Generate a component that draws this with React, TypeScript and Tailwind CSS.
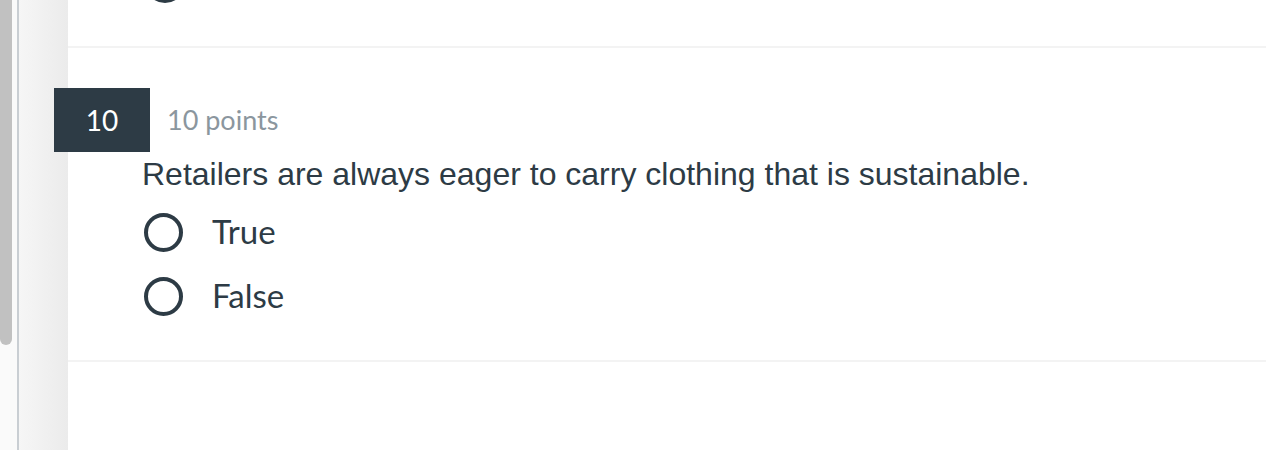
import React from "react";

const lato = { fontFamily: "Lato, 'Open Sans', sans-serif" };

function Radio({ label }: { label: string }) {
  return (
    <label className="flex h-[64px] items-center gap-[29px] pl-[2px] cursor-pointer">
      <span className="block h-[39px] w-[39px] rounded-full border-[4px] border-[#2d3b45] bg-white" />
      <span className="text-[33px] text-[#2d3b45] font-[Lato,sans-serif]">{label}</span>
    </label>
  );
}

export default function App() {
  return (
    <div className="flex h-[450px] w-[1266px] overflow-hidden bg-white" style={lato}>
      {/* browser scrollbar */}
      <div className="flex w-[17px] flex-col bg-[#fafafa]">
        <div className="h-[345px] w-[12px] rounded-b-[7px] bg-[#c1c1c1]" />
      </div>
      <div className="w-[2px] bg-[#c9ced3]" />
      <div className="w-[49px] bg-gradient-to-r from-[#f6f6f6] to-[#ebebeb]" />

      {/* content */}
      <div className="flex flex-1 flex-col">
        <div className="h-[46px]">
          <div className="ml-[77px] mt-[-37px] h-[40px] w-[40px] rounded-full border-[4px] border-[#2d3b45]" />
        </div>
        <div className="h-[2px] bg-[#f3f3f3]" />

        <div className="mt-[40px] -ml-[14px] flex items-center">
          <div className="flex h-[64px] w-[96px] items-center justify-center bg-[#2d3b45] text-[28px] text-white">
            10
          </div>
          <span className="ml-[17px] text-[27px] text-[#8b969e]">10 points</span>
        </div>

        <div className="ml-[74px] mt-[4px]">
          <p className="text-[32px] leading-[37px] text-[#2d3b45] font-['Liberation_Sans',Arial,sans-serif]">
            Retailers are always eager to carry clothing that is sustainable.
          </p>
          <div className="mt-[7px] flex flex-col">
            <Radio label="True" />
            <Radio label="False" />
          </div>
        </div>

        <div className="mt-[32px] h-[2px] bg-[#f3f3f3]" />
      </div>
    </div>
  );
}
